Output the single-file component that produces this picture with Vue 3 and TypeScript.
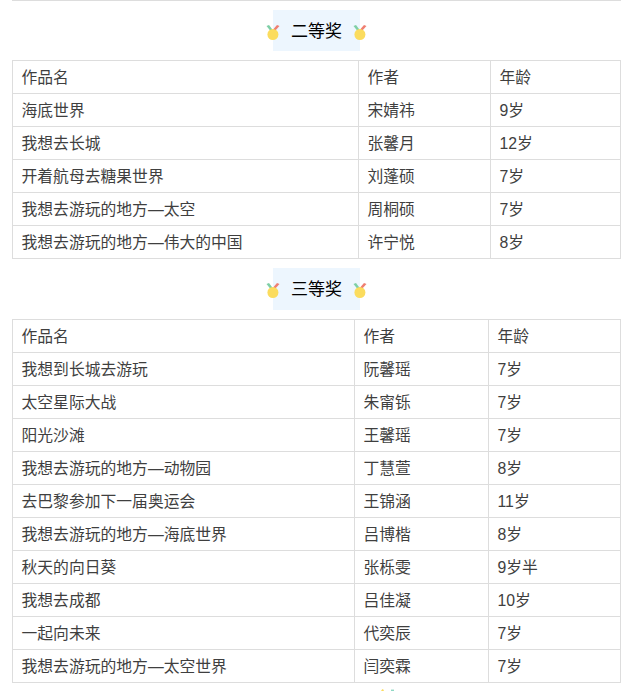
<script setup lang="ts">
interface Row { name: string; author: string; age: string }
interface Section { title: string; cols: [string, string, string]; tone: string; rows: Row[] }

const parse = (s: string): Row[] =>
  s.split('|').map((r) => {
    const [name, author, age] = r.split(',')
    return { name, author, age }
  })

const sections: Section[] = [
  {
    title: '二等奖',
    tone: 'second',
    cols: ['346px', '132px', '130px'],
    rows: parse('海底世界,宋婧祎,9岁|我想去长城,张馨月,12岁|开着航母去糖果世界,刘蓬硕,7岁|我想去游玩的地方—太空,周桐硕,7岁|我想去游玩的地方—伟大的中国,许宁悦,8岁'),
  },
  {
    title: '三等奖',
    tone: 'third',
    cols: ['342px', '134px', '132px'],
    rows: parse('我想到长城去游玩,阮馨瑶,7岁|太空星际大战,朱甯铄,7岁|阳光沙滩,王馨瑶,7岁|我想去游玩的地方—动物园,丁慧萱,8岁|去巴黎参加下一届奥运会,王锦涵,11岁|我想去游玩的地方—海底世界,吕博楷,8岁|秋天的向日葵,张栎雯,9岁半|我想去成都,吕佳凝,10岁|一起向未来,代奕辰,7岁|我想去游玩的地方—太空世界,闫奕霖,7岁'),
  },
]
</script>

<template>
  <main class="page">
    <div class="top-rule"></div>
    <section v-for="s in sections" :key="s.title" class="award" :class="s.tone">
      <h2 class="heading">
        <svg class="medal" viewBox="0 0 14 15" aria-hidden="true">
          <path d="M0.5 1 L3 0 L7.5 6 L5.3 7 Z" fill="#7ecfa6" />
          <path d="M13.5 1 L11 0 L5.8 6 L8 7 Z" fill="#ef7f72" />
          <circle cx="6.9" cy="9.5" r="5.5" fill="#fbdc5e" />
        </svg>
        <span class="label">{{ s.title }}</span>
        <svg class="medal" viewBox="0 0 14 15" aria-hidden="true">
          <path d="M0.5 1 L3 0 L7.5 6 L5.3 7 Z" fill="#7ecfa6" />
          <path d="M13.5 1 L11 0 L5.8 6 L8 7 Z" fill="#ef7f72" />
          <circle cx="6.9" cy="9.5" r="5.5" fill="#fbdc5e" />
        </svg>
      </h2>
      <table class="works">
        <colgroup>
          <col v-for="(w, i) in s.cols" :key="i" :style="{ width: w }" />
        </colgroup>
        <tbody>
          <tr>
            <td>作品名</td>
            <td>作者</td>
            <td>年龄</td>
          </tr>
          <tr v-for="r in s.rows" :key="r.name">
            <td>{{ r.name }}</td>
            <td>{{ r.author }}</td>
            <td>{{ r.age }}</td>
          </tr>
        </tbody>
      </table>
    </section>
    <div class="next">
      <svg class="next-medal" viewBox="0 0 13 2" aria-hidden="true">
        <path d="M0 2 L1 0.6 L2 0 L3 2 Z" fill="#fbdc5e" />
        <rect x="10" y="0.6" width="3" height="1.4" fill="#8fd8c4" />
      </svg>
    </div>
  </main>
</template>

<style>
html,
body {
  margin: 0;
  background: #fff;
  overflow: hidden;
}
</style>

<style scoped>
.page {
  width: 609px;
  height: 692px;
  margin-left: 12px;
  overflow: hidden;
  font-family: "Liberation Sans", "Noto Sans CJK SC", sans-serif;
  font-size: 15.8px;
  color: #3f3f3f;
}
.top-rule {
  height: 1px;
  background: #dddddd;
}
.award.second {
  height: 258px;
}
.award.third {
  height: 424px;
}
.heading {
  display: flex;
  justify-content: center;
  align-items: center;
  margin: 0;
  padding: 9px 0;
  font-size: 17px;
  font-weight: 400;
  color: #000;
}
.label {
  width: 87px;
  height: 41px;
  line-height: 44px;
  text-align: center;
  background: #edf6fe;
}
.third .label {
  height: 42px;
  line-height: 43px;
}
.medal {
  width: 14px;
  height: 15px;
  flex: none;
  margin: 4px -7px 0 0;
  position: relative;
}
.heading .medal:last-child {
  margin: 4px 0 0 -7px;
}
.third .medal,
.third .heading .medal:last-child {
  margin-top: 3px;
}
.works {
  width: 609px;
  border-collapse: collapse;
  table-layout: fixed;
}
.works td {
  box-sizing: border-box;
  height: 33px;
  padding: 0 8.5px 2px;
  border: 1px solid #dddddd;
  white-space: nowrap;
}
.next {
  padding: 6px 0 0 369px;
  line-height: 0;
}
.next-medal {
  width: 13px;
  height: 2px;
  display: block;
}
</style>
